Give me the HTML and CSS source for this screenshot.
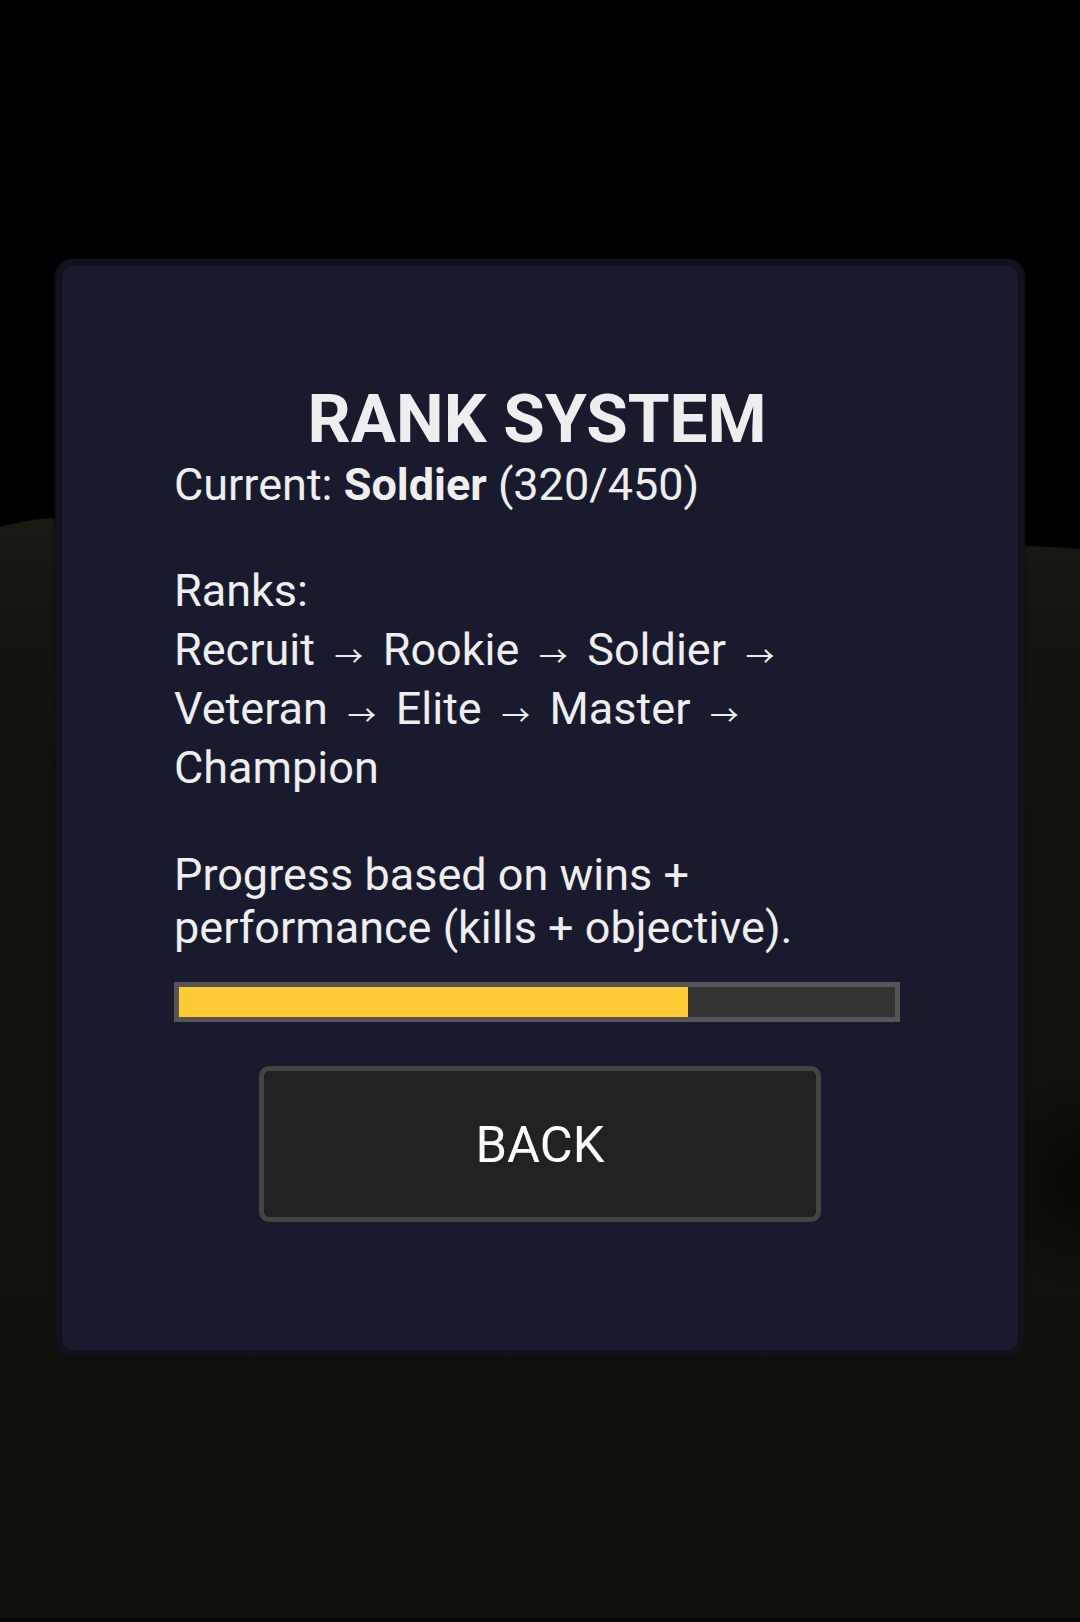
FILE: index.html
```html
<!DOCTYPE html>
<html lang="en">
<head>
<meta charset="utf-8">
<title>Rank System</title>
<link rel="stylesheet" href="styles.css">
</head>
<body>
<div class="scene">
  <svg class="ground" width="1080" height="1622" viewBox="0 0 1080 1622" aria-hidden="true">
    <defs>
      <linearGradient id="g" x1="0" y1="0" x2="0" y2="1">
        <stop offset="0" stop-color="#181b13"/>
        <stop offset="0.12" stop-color="#11130c"/>
        <stop offset="1" stop-color="#0f110a"/>
      </linearGradient>
      <radialGradient id="sh" cx="1090" cy="1180" r="110" gradientUnits="userSpaceOnUse">
        <stop offset="0" stop-color="#060805" stop-opacity="0.9"/>
        <stop offset="1" stop-color="#060805" stop-opacity="0"/>
      </radialGradient>
    </defs>
    <path d="M0 527 Q26 520 52 518 L1027 546 Q1054 547 1080 549 L1080 1622 L0 1622 Z" fill="url(#g)"/>
    <rect x="900" y="1000" width="180" height="360" fill="url(#sh)"/>
    <rect x="0" y="1618" width="1080" height="4" fill="#050604"/>
  </svg>

  <section class="card">
    <h1 class="title">RANK SYSTEM</h1>
    <p class="info">Current: <strong>Soldier</strong> (320/450)</p>
    <p class="info ranks">Ranks:<br>Recruit <span class="arr">→</span> Rookie <span class="arr">→</span> Soldier <span class="arr">→</span> Veteran <span class="arr">→</span> Elite <span class="arr">→</span> Master <span class="arr">→</span> Champion</p>
    <p class="info progress">Progress based on wins + performance (kills + objective).</p>
    <div class="bar"><div class="fill" style="width: 71.1%"></div></div>
    <button class="btn" type="button">BACK</button>
  </section>
</div>
</body>
</html>
```

FILE: styles.css
```css
html, body {
  margin: 0;
  padding: 0;
  background: #000;
}

body {
  width: 1080px;
  height: 1622px;
  overflow: hidden;
  font-family: Roboto, "Noto Sans", "Liberation Sans", sans-serif;
  color: #eeeeee;
}

.scene {
  position: relative;
  width: 1080px;
  height: 1622px;
  padding-top: 266px;
  box-sizing: border-box;
}

.ground {
  position: absolute;
  left: 0;
  top: 0;
  display: block;
}

.card {
  position: relative;
  margin-left: 62px;
  width: 956px;
  box-sizing: border-box;
  padding: 113px 118px 128px 112px;
  background: #1a1a2e;
  border-radius: 11px;
  box-shadow: 0 0 0 7px #11111c, 0 0 3px 8px rgba(12, 12, 20, 0.6);
}

.title {
  margin: 0;
  font-size: 67.5px;
  font-weight: 700;
  line-height: normal;
  text-align: center;
  color: #eeeeee;
}

.info {
  margin: 0;
  font-size: 45px;
  line-height: normal;
  font-weight: 400;
}

.info strong {
  font-weight: 700;
}

.ranks {
  margin-top: 49.6px;
  line-height: 59px;
}

.progress {
  margin-top: 51.7px;
}

/* small full-width arrow, glyph lowered toward the x-height middle */
.arr {
  font-family: "Noto Sans CJK JP", sans-serif;
  font-size: 28.5px;
  line-height: 0;
  vertical-align: -2.3px;
  margin: 0 8.5px;
}

.bar {
  margin-top: 28px;
  height: 40px;
  box-sizing: border-box;
  border: 5.6px solid #555555;
  background: #333333;
}

.fill {
  height: 100%;
  background: #ffca33;
}

.btn {
  display: flex;
  align-items: center;
  justify-content: center;
  margin: 44px auto 0;
  width: 562px;
  height: 156px;
  box-sizing: border-box;
  border: 5.6px solid #444444;
  border-radius: 10px;
  background: #222222;
  color: #ffffff;
  font-family: Roboto, "Liberation Sans", sans-serif;
  font-size: 50.6px;
  font-weight: 400;
  padding: 0;
  position: relative;
  left: 3px;
}
```
